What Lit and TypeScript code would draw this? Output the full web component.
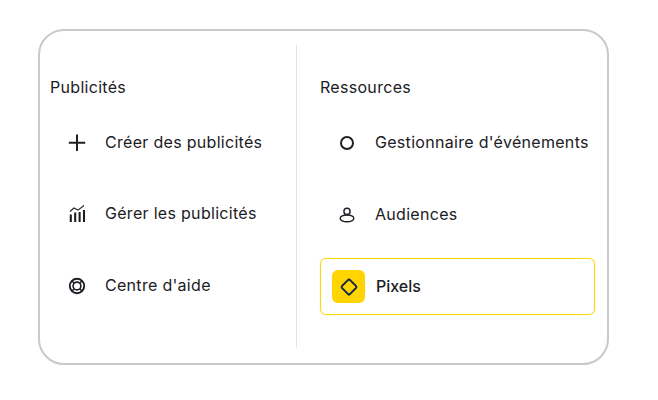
import { LitElement, css, html, svg } from "lit";
import { customElement } from "lit/decorators.js";

const icons = {
  plus: svg`<path d="M12 3.6v16.4M3.8 11.8h16.4" stroke-width="2"/>`,
  chart: svg`<path d="M5.8 12.5v7.5M10.2 10.5v9.5M14.6 10v10M19 8v12" stroke-width="2.1"/><path d="M5 9.5 9 6l4 2.2L19 3.5" stroke-width="1.1"/>`,
  help: svg`<circle cx="12" cy="12" r="7.2" stroke-width="1.9"/><circle cx="12" cy="12" r="3.9" stroke-width="1.6"/><path d="m6.8 6.8 2.5 2.5M17.2 6.8l-2.5 2.5M6.8 17.2l2.5-2.5M17.2 17.2l-2.5-2.5" stroke-width="1.6"/>`,
  circle: svg`<circle cx="12" cy="12" r="6" stroke-width="2"/>`,
  person: svg`<circle cx="12" cy="8.4" r="3.1" stroke-width="1.4"/><ellipse cx="12" cy="15.4" rx="6.8" ry="3.4" stroke-width="1.4"/>`,
  diamond: svg`<path d="M10.9 5.1a1.6 1.6 0 0 1 2.2 0l5.8 5.8a1.6 1.6 0 0 1 0 2.2l-5.8 5.8a1.6 1.6 0 0 1-2.2 0l-5.8-5.8a1.6 1.6 0 0 1 0-2.2Z" stroke-width="2"/>`,
};

@customElement("app-root")
export class AppRoot extends LitElement {
  static styles = css`
    :host {
      display: block;
      width: 658px;
      height: 400px;
      box-sizing: border-box;
      padding: 29px 0 0 38px;
      background: #fff;
      font-family: Inter, "Liberation Sans", sans-serif;
      color: #1c2024;
    }
    .card {
      box-sizing: border-box;
      width: 571px;
      height: 336px;
      border: 2px solid #c9c9c9;
      border-radius: 26px;
      padding: 14px 0 15px;
      display: grid;
      grid-template-columns: 257px 1fr;
      background: #fff;
    }
    .col {
      display: flex;
      flex-direction: column;
      padding-top: 32px;
    }
    .left {
      padding-left: 10px;
      border-right: 1px solid #e4e4e4;
    }
    .right {
      padding-left: 23px;
    }
    h2 {
      margin: 0 0 17px;
      font-size: 16px;
      line-height: 20px;
      font-weight: 400;
      letter-spacing: 0.3px;
    }
    .list {
      display: flex;
      flex-direction: column;
      gap: 15px;
      width: 275px;
    }
    .left .list {
      gap: 14.5px;
    }
    .row {
      box-sizing: border-box;
      height: 57px;
      display: flex;
      align-items: center;
      gap: 11px;
      padding-left: 10px;
      font-size: 16px;
      letter-spacing: 0.3px;
      white-space: nowrap;
    }
    .label {
      padding-bottom: 2px;
    }
    .ico {
      width: 34px;
      display: flex;
      justify-content: center;
    }
    svg {
      width: 24px;
      height: 24px;
      fill: none;
      stroke: #1c2024;
      display: block;
    }
    .active {
      border: 1px solid #ffd60a;
      box-shadow: 0 0 1px #ffd60a;
      border-radius: 6px;
      padding-left: 11px;
      font-weight: 500;
      letter-spacing: 0;
    }
    .active .label {
      padding-bottom: 1px;
    }
    .active .ico {
      width: 33px;
      height: 33px;
      border-radius: 6px;
      background: #ffd400;
      align-items: center;
    }
    .active svg {
      stroke: #14284b;
    }
  `;

  private item(icon: keyof typeof icons, label: string, active = false) {
    return html`<div class="row ${active ? "active" : ""}">
      <span class="ico"><svg viewBox="0 0 24 24">${icons[icon]}</svg></span>
      <span class="label">${label}</span>
    </div>`;
  }

  render() {
    return html`<div class="card">
      <section class="col left">
        <h2>Publicités</h2>
        <div class="list">
          ${this.item("plus", "Créer des publicités")}
          ${this.item("chart", "Gérer les publicités")}
          ${this.item("help", "Centre d'aide")}
        </div>
      </section>
      <section class="col right">
        <h2>Ressources</h2>
        <div class="list">
          ${this.item("circle", "Gestionnaire d'événements")}
          ${this.item("person", "Audiences")}
          ${this.item("diamond", "Pixels", true)}
        </div>
      </section>
    </div>`;
  }
}
